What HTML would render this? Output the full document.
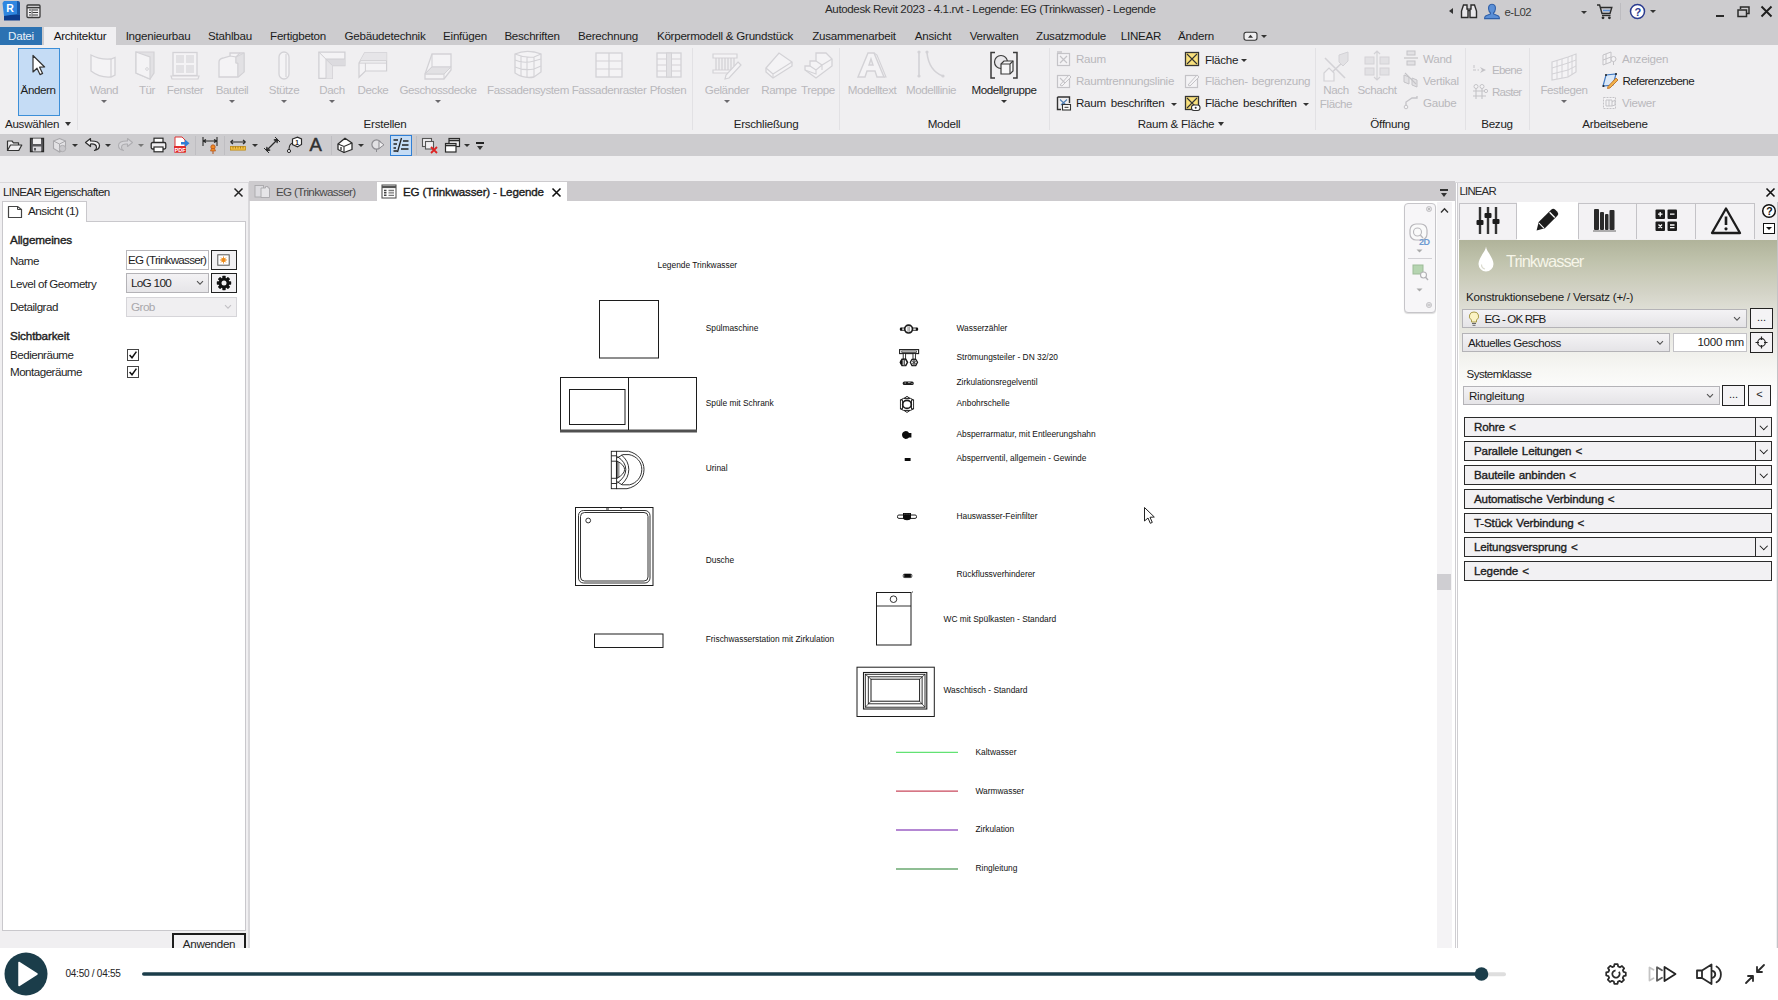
<!DOCTYPE html>
<html lang="de">
<head>
<meta charset="utf-8">
<title>Autodesk Revit 2023 - 4.1.rvt - Legende: EG (Trinkwasser) - Legende</title>
<style>
*{box-sizing:border-box;margin:0;padding:0}
html,body{width:1778px;height:1000px;overflow:hidden;background:#fff}
body{font-family:"Liberation Sans",sans-serif;font-size:12px;color:#1e1e1e;position:relative}
.abs{position:absolute}
#app{position:absolute;left:0;top:0;width:1778px;height:1000px;overflow:hidden;background:#fff}
/* ---------- title bar ---------- */
#titlebar{position:absolute;left:0;top:0;width:1778px;height:45px;background:#cdcccf}
#title{position:absolute;left:825px;top:2px;width:330px;text-align:center;font-size:11.6px;color:#2a2a2a;white-space:nowrap;letter-spacing:-0.39px}
.tab{position:absolute;top:27px;height:18px;line-height:18px;font-size:11.6px;letter-spacing:-0.25px;color:#1c1c1c;white-space:nowrap;transform:translateX(-50%)}
#tabDatei{position:absolute;left:0;top:27px;width:42px;height:18px;background:#2c72b2;color:#e8f0f8;text-align:center;line-height:18px;font-size:11.6px;letter-spacing:-0.25px}
#tabArch{position:absolute;left:44px;top:27px;width:72px;height:18px;background:#f0eff1;text-align:center;line-height:18px;font-size:11.6px;letter-spacing:-0.25px;color:#111}
/* ---------- ribbon ---------- */
#ribbon{position:absolute;left:0;top:45px;width:1778px;height:89px;background:#f0eff1;border-top:1px solid #f0eff1}
.rsep{position:absolute;top:2px;width:1px;height:82px;background:#e2e1e4}
.rlabel{position:absolute;top:71px;font-size:11.6px;letter-spacing:-0.25px;color:#222;white-space:nowrap;transform:translateX(-50%)}
.btn{position:absolute;top:37px;font-size:11.6px;letter-spacing:-0.42px;color:#b9b8bc;white-space:nowrap;transform:translateX(-50%);line-height:14px;text-align:center}
.btn.on{color:#1c1c1c}
.sbtn{position:absolute;font-size:11.6px;letter-spacing:-0.28px;color:#b9b8bc;white-space:nowrap;line-height:14px}
.sbtn.on{color:#1c1c1c}
.dd{position:absolute;width:0;height:0;border-left:3px solid transparent;border-right:3px solid transparent;border-top:3.5px solid #6a696d}
.dd.on{border-top-color:#333}
/* ---------- qat ---------- */
#qat{position:absolute;left:0;top:133px;width:1778px;height:24px;background:linear-gradient(#f0eff1 0,#f0eff1 1px,#cdcccf 1px,#cdcccf 23px,#f0eff1 23px)}
#band{position:absolute;left:0;top:157px;width:1778px;height:25px;background:#f0eff1}
/* ---------- left panel ---------- */
#left{position:absolute;left:0;top:182px;width:250px;height:766px;background:#f0eff1;border-right:2px solid #d9d8db}
#leftbody{position:absolute;left:2px;top:39px;width:244px;height:710px;background:#fff;border:1px solid #c9c8cc}
#leftTab{position:absolute;left:2px;top:19px;width:85px;height:21px;background:#fff;border:1px solid #c9c8cc;border-bottom:none}
.lp{position:absolute;font-size:11.6px;color:#1e1e1e;white-space:nowrap;letter-spacing:-0.5px}
.lp.b{font-weight:normal;-webkit-text-stroke:0.4px #1e1e1e;font-size:11.7px;letter-spacing:-0.15px}
/* ---------- canvas ---------- */
#ctabs{position:absolute;left:249px;top:181px;width:1206px;height:20px;background:#cdcbce}
#canvas{position:absolute;left:250px;top:202px;width:1187px;height:746px;background:#fff}
#vscroll{position:absolute;left:1437px;top:202px;width:15px;height:746px;background:#f4f3f5}
.lg{position:absolute;margin-top:-0.5px;font-size:8.4px;color:#111;white-space:nowrap;line-height:10px}
/* ---------- right panel ---------- */
#right{position:absolute;left:1455px;top:182px;width:323px;height:766px;background:#f0eff1}
.rp{position:absolute;font-size:11.6px;letter-spacing:-0.25px;color:#1b1b1b;white-space:nowrap}
.acc{position:absolute;left:9px;width:308px;height:20px;border:1px solid #2b2b2b;background:#f2f1f3;font-size:11.6px;line-height:18px;padding-left:9px;color:#1b1b1b;letter-spacing:-0.15px;-webkit-text-stroke:0.35px #1b1b1b;word-spacing:1px}
.acc i{position:absolute;right:0;top:0;width:16px;height:18px;border-left:1px solid #2b2b2b;font-style:normal}
.acc i:after{content:'';position:absolute;left:4.5px;top:4.5px;width:4.5px;height:4.5px;border-right:1.9px solid #111;border-bottom:1.9px solid #111;transform:rotate(45deg)}
.sb{font-weight:normal;-webkit-text-stroke:0.35px currentColor;font-size:11.6px;letter-spacing:-0.15px}
/* ---------- player ---------- */
#player{position:absolute;left:0;top:948px;width:1778px;height:52px;background:#fff}
</style>
</head>
<body>
<div id="app">

<!-- TITLEBAR -->
<div id="titlebar">
  <div id="title">Autodesk Revit 2023 - 4.1.rvt - Legende: EG (Trinkwasser) - Legende</div>
  <!-- Revit logo -->
<svg class="abs" style="left:1px;top:0px" width="20" height="22" viewBox="0 0 20 22"><path d="M3 1 L17 1 Q19 1 19 3 L19 20 L3 20 Z" fill="#1858a8"/><path d="M3 15 L19 15 L19 20.5 L3 20.5 Z" fill="#0d3c8c"/><path d="M1.5 3 L3 1 L16 1 L16 14 L3 16 Z" fill="#2f86e0"/><text x="5.2" y="12.3" font-family="Liberation Sans, sans-serif" font-weight="bold" font-size="10.5" fill="#fff">R</text></svg>
<svg class="abs" style="left:26px;top:4px" width="15" height="15" viewBox="0 0 15 15"><rect x="1" y="1" width="13" height="12.5" rx="1" fill="#efeef0" stroke="#3a3a3a" stroke-width="1.3"/><path d="M1 3.6 L14 3.6" stroke="#3a3a3a" stroke-width="1.6"/><path d="M3 6 L5 6 M3 8.5 L5 8.5 M3 11 L5 11" stroke="#3a3a3a" stroke-width="1.2"/><path d="M6.5 6 L12 6 M6.5 8.5 L12 8.5 M6.5 11 L12 11" stroke="#3a3a3a" stroke-width="1.2"/><path d="M6 5 L6 12.5" stroke="#3a3a3a" stroke-width=".8"/></svg>
<!-- right side -->
<div class="abs" style="left:1449px;top:8px;width:0;height:0;border-top:3.5px solid transparent;border-bottom:3.5px solid transparent;border-right:4px solid #333"></div>
<svg class="abs" style="left:1460px;top:3px" width="18" height="17" viewBox="0 0 18 17"><path d="M3.5 2 L7 2 L7 6 L8 6 L8 14.5 L1.5 14.5 L1.5 8 Z M14.5 2 L11 2 L11 6 L10 6 L10 14.5 L16.5 14.5 L16.5 8 Z" fill="#e8e7ea" stroke="#2c2c2c" stroke-width="1.4"/><path d="M8 7.5 L10 7.5" stroke="#2c2c2c" stroke-width="1.4"/></svg>
<svg class="abs" style="left:1483px;top:3px" width="18" height="17" viewBox="0 0 18 17"><path d="M9 1.2 C12 1.2 12.6 3.6 12.4 6 C12.2 8 11.3 9.3 10.6 9.8 L10.6 11 L15.4 13 Q16.4 13.6 16.4 15.6 L1.6 15.6 Q1.6 13.6 2.6 13 L7.4 11 L7.4 9.8 C6.7 9.3 5.8 8 5.6 6 C5.4 3.6 6 1.2 9 1.2 Z" fill="#5b8fd6" stroke="#2f5fa8" stroke-width="1.1"/></svg>
<div class="abs" style="left:1504.500px;top:6px;font-size:11.4px;color:#3a3a3a;letter-spacing:-0.5px">e-L02</div>
<div class="dd on" style="left:1581px;top:11px"></div>
<svg class="abs" style="left:1596px;top:3px" width="18" height="17" viewBox="0 0 18 17"><path d="M1 2 L3.6 2 L6 10.5 L14 10.5 L15.8 4.5 L4.6 4.5" fill="none" stroke="#2c2c2c" stroke-width="1.4"/><path d="M6 12.5 L14.5 12.5" stroke="#2c2c2c" stroke-width="1.3"/><circle cx="7" cy="14.8" r="1.4" fill="#2c2c2c"/><circle cx="13.4" cy="14.8" r="1.4" fill="#2c2c2c"/><path d="M7 7.5 L14 7.5" stroke="#5b8fd6" stroke-width="1.5"/></svg>
<div class="abs" style="left:1620px;top:3px;width:1px;height:17px;background:#bdbcc0"></div>
<svg class="abs" style="left:1629px;top:3px" width="17" height="17" viewBox="0 0 17 17"><circle cx="8.5" cy="8.5" r="7" fill="#fff" stroke="#2a3b8f" stroke-width="1.5"/><text x="5.6" y="12.6" font-family="Liberation Sans, sans-serif" font-weight="bold" font-size="11" fill="#2a3b8f">?</text></svg>
<div class="dd on" style="left:1650px;top:10px"></div>
<div class="abs" style="left:1716px;top:14.500px;width:8px;height:2px;background:#2a2a2a"></div>
<svg class="abs" style="left:1737px;top:6px" width="13" height="12" viewBox="0 0 13 12"><path d="M3.5 3 L3.5 1 L12 1 L12 7.5 L9.5 7.5" fill="none" stroke="#2a2a2a" stroke-width="1.5"/><rect x="1" y="4" width="8.5" height="6.5" fill="none" stroke="#2a2a2a" stroke-width="1.5"/></svg>
<svg class="abs" style="left:1760px;top:5px" width="13" height="13" viewBox="0 0 13 13"><path d="M1.5 1.5 L11.5 11.5 M11.5 1.5 L1.5 11.5" stroke="#1e1e1e" stroke-width="1.9"/></svg>
<!-- ribbon minimize toggle -->
<svg class="abs" style="left:1243px;top:31px" width="16" height="11" viewBox="0 0 16 11"><rect x="1" y="1.2" width="13" height="8" rx="2.2" fill="#efeef0" stroke="#333" stroke-width="1.1"/><path d="M5 6.8 L7.5 3.8 L10 6.8 Z" fill="#333"/></svg>
<div class="dd on" style="left:1261px;top:35px"></div>

  <div id="tabDatei">Datei</div>
  <div id="tabArch">Architektur</div>
  <div class="tab" style="left:158px">Ingenieurbau</div>
  <div class="tab" style="left:230px">Stahlbau</div>
  <div class="tab" style="left:298px">Fertigbeton</div>
  <div class="tab" style="left:385px">Gebäudetechnik</div>
  <div class="tab" style="left:465px">Einfügen</div>
  <div class="tab" style="left:532px">Beschriften</div>
  <div class="tab" style="left:608px">Berechnung</div>
  <div class="tab" style="left:725px">Körpermodell &amp; Grundstück</div>
  <div class="tab" style="left:854px">Zusammenarbeit</div>
  <div class="tab" style="left:933px">Ansicht</div>
  <div class="tab" style="left:994px">Verwalten</div>
  <div class="tab" style="left:1071px">Zusatzmodule</div>
  <div class="tab" style="left:1141px">LINEAR</div>
  <div class="tab" style="left:1196px">Ändern</div>
</div>

<!-- RIBBON -->
<div id="ribbon">
<!-- selected Ändern -->
<div class="abs" style="left:18px;top:2px;width:42px;height:68px;background:#c5dcf5;border:1px solid #3d8fd8"></div>
<svg class="abs" style="left:30px;top:8px" width="18" height="24" viewBox="0 0 18 24"><path d="M3 1.5 L3 18 L7 14.2 L10 20.6 L12.6 19.4 L9.6 13.2 L14.6 13 Z" fill="#fff" stroke="#333" stroke-width="1.2" stroke-linejoin="round"/></svg>
<div class="btn on" style="left:38px">Ändern</div>
<div class="sbtn on" style="left:5px;top:71px">Auswählen</div><div class="dd on" style="left:65px;top:76px;border-left-width:3.5px;border-right-width:3.5px;border-top-width:4px"></div>
<div class="rsep" style="left:77px"></div>

<!-- Erstellen -->
<svg class="abs" style="left:88px;top:4px" width="32" height="32" viewBox="0 0 32 32"><path d="M3 5 Q12 10 23 9 L27 7.5 L27 25 L23 27 Q12 28 3 21 Z" fill="#f4f3f5" stroke="#d3d2d6" stroke-width="1.3"/><path d="M23 9 L23 27" stroke="#d3d2d6" stroke-width="1.2" fill="none"/></svg>
<div class="btn" style="left:104px">Wand</div><div class="dd" style="left:101px;top:54px"></div>
<svg class="abs" style="left:132px;top:3px" width="30" height="32" viewBox="0 0 30 32"><path d="M4 3 L22 3 L22 24 L18 30 L4 24 Z" fill="#e2e1e4" stroke="#d3d2d6" stroke-width="1.2"/><path d="M4 3 L18 8 L18 30 L4 24 Z" fill="#f4f3f5" stroke="#d3d2d6" stroke-width="1.2"/><circle cx="15" cy="20" r="1.3" fill="#fff" stroke="#d3d2d6"/></svg>
<div class="btn" style="left:147px">Tür</div>
<svg class="abs" style="left:169px;top:4px" width="32" height="32" viewBox="0 0 32 32"><rect x="4" y="2.5" width="24" height="23" fill="#f4f3f5" stroke="#d3d2d6" stroke-width="1.3"/><rect x="7" y="5" width="8" height="8" fill="#e2e1e4"/><rect x="17" y="5" width="8" height="8" fill="#e2e1e4"/><rect x="7" y="15" width="8" height="8" fill="#e2e1e4"/><rect x="17" y="15" width="8" height="8" fill="#e2e1e4"/><path d="M2 26 L30 26 L29 29 L3 29 Z" fill="#f4f3f5" stroke="#d3d2d6" stroke-width="1.2"/></svg>
<div class="btn" style="left:185px">Fenster</div>
<svg class="abs" style="left:216px;top:4px" width="32" height="32" viewBox="0 0 32 32"><path d="M3 12 Q3 9 7 8 L14 6 L14 3 L28 3 L28 22 L22 27 L3 27 Z" fill="#f4f3f5" stroke="#d3d2d6" stroke-width="1.3"/><path d="M14 6 L20 7 L20 13 L22 13 L22 27 M22 13 L28 8 M20 7 L24 3" fill="none" stroke="#d3d2d6" stroke-width="1.2"/><path d="M20 7 L28 3 L28 22 L22 27 L22 13 L20 13 Z" fill="#e2e1e4" stroke="#d3d2d6" stroke-width="1"/></svg>
<div class="btn" style="left:232px">Bauteil</div><div class="dd" style="left:229px;top:54px"></div>
<svg class="abs" style="left:274px;top:4px" width="20" height="32" viewBox="0 0 20 32"><rect x="5" y="2" width="10" height="27" rx="5" fill="#f4f3f5" stroke="#d3d2d6" stroke-width="1.3"/><path d="M12 4 L12 27" stroke="#e2e1e4" stroke-width="2"/></svg>
<div class="btn" style="left:284px">Stütze</div><div class="dd" style="left:281px;top:54px"></div>
<svg class="abs" style="left:316px;top:4px" width="32" height="32" viewBox="0 0 32 32"><path d="M2.900 2.100 L28.900 2.100 L28.900 15.500 L16.300 15.500 L16.300 28.400 L2.900 28.400 Z" fill="#f4f3f5" stroke="#d0cfd3" stroke-width="1.300"/><path d="M10 9 L28.900 9 L28.900 15.500 L16.300 15.500 Z" fill="#dcdbdf"/><path d="M10 9 L16.300 15.500 L16.300 28.400 L10 28.400 Z" fill="#e6e5e8"/><path d="M2.900 2.100 L16.300 15.500 M10 9 L28.900 9 M10 9 L10 28.400" stroke="#d0cfd3" stroke-width="1" fill="none"/></svg>
<div class="btn" style="left:332px">Dach</div><div class="dd" style="left:329px;top:54px"></div>
<svg class="abs" style="left:357px;top:4px" width="32" height="32" viewBox="0 0 32 32"><path d="M2 13.100 L7.600 2.900 L29.600 2.900 L29.600 21 L8.400 21 L2 27.300 Z" fill="#f4f3f5" stroke="#d0cfd3" stroke-width="1.200"/><path d="M2 13.100 L7.600 2.900 L29.600 2.900 L29.600 10.700 L3.400 10.700 Z" fill="#e6e5e8"/><path d="M2 13.100 L29.600 13.100 M3.400 10.700 L29.600 10.700 M8.400 13.100 L8.400 21" stroke="#d0cfd3" stroke-width="1" fill="none"/></svg>
<div class="btn" style="left:373px">Decke</div>
<svg class="abs" style="left:422px;top:4px" width="32" height="32" viewBox="0 0 32 32"><path d="M10 4 L29 4 L29 20 L22 29 L3 29 L3 24 Z" fill="#f4f3f5" stroke="#d3d2d6" stroke-width="1.3"/><path d="M3 24 L22 24 L29 16 M22 24 L22 29 M10 4 L10 17 L3 24 M10 17 L29 17" stroke="#d3d2d6" stroke-width="1.1" fill="none"/><path d="M3 24 L10 17 L29 17 L22 24 Z" fill="#e2e1e4" stroke="#d3d2d6"/></svg>
<div class="btn" style="left:438px">Geschossdecke</div><div class="dd" style="left:435px;top:54px"></div>
<svg class="abs" style="left:512px;top:3px" width="32" height="32" viewBox="0 0 32 32"><path d="M3 5 Q12 1 22 3 L29 5 L29 23 L22 28 Q12 30 3 24 Z" fill="#f4f3f5" stroke="#d3d2d6" stroke-width="1.3"/><path d="M3 11 Q12 15 22 12 L29 10 M3 18 Q12 22 22 20 L29 17 M9 7 L9 27 M15 8 L15 28 M22 8 L22 28 M3 5 Q12 9 22 8 L29 5" stroke="#d3d2d6" stroke-width="1.1" fill="none"/></svg>
<div class="btn" style="left:528px">Fassadensystem</div>
<svg class="abs" style="left:593px;top:4px" width="32" height="32" viewBox="0 0 32 32"><rect x="3" y="3" width="26" height="24" fill="#f4f3f5" stroke="#d3d2d6" stroke-width="1.3"/><path d="M3 11 L29 11 M3 19 L29 19 M16 3 L16 27" stroke="#d3d2d6" stroke-width="1.2"/></svg>
<div class="btn" style="left:609px">Fassadenraster</div>
<svg class="abs" style="left:653px;top:4px" width="32" height="32" viewBox="0 0 32 32"><rect x="4" y="3" width="24" height="24" fill="#f4f3f5" stroke="#d3d2d6" stroke-width="1.3"/><rect x="13.5" y="3" width="5" height="24" fill="#e2e1e4" stroke="#d3d2d6"/><path d="M4 9 L13 9 M4 15 L13 15 M4 21 L13 21 M19 9 L28 9 M19 15 L28 15 M19 21 L28 21" stroke="#d3d2d6" stroke-width="1.1"/></svg>
<div class="btn" style="left:668px">Pfosten</div>
<div class="rlabel" style="left:385px">Erstellen</div>
<div class="rsep" style="left:692px"></div>

<!-- Erschließung -->
<svg class="abs" style="left:710px;top:4px" width="34" height="32" viewBox="0 0 34 32"><path d="M3 4 L27 4 L27 8 L3 8 Z M3 20 L22 20 L22 23 L3 23 Z" fill="#f4f3f5" stroke="#d3d2d6" stroke-width="1.2"/><path d="M6 8 L6 20 M9 8 L9 20 M12 8 L12 20 M15 8 L15 20 M18 8 L18 20 M21 8 L21 20 M24 8 L24 16" stroke="#d3d2d6" stroke-width="1.3"/><path d="M28 12 L31 15 L19 28 L15 29 L16 25 Z" fill="#f4f3f5" stroke="#d3d2d6" stroke-width="1.2"/></svg>
<div class="btn" style="left:727px">Geländer</div><div class="dd" style="left:724px;top:54px"></div>
<svg class="abs" style="left:763px;top:4px" width="32" height="32" viewBox="0 0 32 32"><path d="M3 18 L16 3 L29 12 L29 16 L10 28 L3 22 Z" fill="#f4f3f5" stroke="#d3d2d6" stroke-width="1.3"/><path d="M3 18 L10 24 L29 12 M10 24 L10 28" stroke="#d3d2d6" stroke-width="1.1" fill="none"/></svg>
<div class="btn" style="left:779px">Rampe</div>
<svg class="abs" style="left:802px;top:4px" width="32" height="32" viewBox="0 0 32 32"><path d="M14 3 L24 3 L30 9 L30 16 L14 28 L3 20 L3 16 L8 16 L8 11 L14 11 Z" fill="#f4f3f5" stroke="#d3d2d6" stroke-width="1.3"/><path d="M14 11 L20 15 L30 9 M8 16 L14 20 L20 15 M3 20 L14 24 L14 20 M20 15 L20 20" stroke="#d3d2d6" stroke-width="1.1" fill="none"/></svg>
<div class="btn" style="left:818px">Treppe</div>
<div class="rlabel" style="left:766px">Erschließung</div>
<div class="rsep" style="left:839px"></div>

<!-- Modell -->
<svg class="abs" style="left:855px;top:4px" width="34" height="32" viewBox="0 0 34 32"><path d="M3 27 L13 3 L19 3 L29 27 L22 27 L20 21 L12 21 L10 27 Z M14 15 L18 15 L16 9 Z" fill="#f4f3f5" stroke="#d3d2d6" stroke-width="1.4" fill-rule="evenodd"/><path d="M19 3 L22 5 L31 27 L29 27" fill="none" stroke="#d3d2d6" stroke-width="1.1"/></svg>
<div class="btn" style="left:872px">Modelltext</div>
<svg class="abs" style="left:915px;top:3px" width="32" height="34" viewBox="0 0 32 34"><path d="M4 4 L4 26 M12 4 Q14 22 28 27" fill="none" stroke="#d3d2d6" stroke-width="1.6"/><circle cx="4" cy="3" r="1.6" fill="#d3d2d6"/><circle cx="4" cy="27" r="1.6" fill="#d3d2d6"/><circle cx="12" cy="3" r="1.6" fill="#d3d2d6"/><circle cx="28" cy="27" r="1.6" fill="#d3d2d6"/></svg>
<div class="btn" style="left:931px">Modelllinie</div>
<svg class="abs" style="left:988px;top:4px" width="32" height="32" viewBox="0 0 32 32"><path d="M7 2.5 L3 2.5 L3 28 L7 28 M25 2.5 L29 2.5 L29 28 L25 28" fill="none" stroke="#3a3a3a" stroke-width="1.5"/><circle cx="13" cy="12" r="6.5" fill="#e9e8eb" stroke="#3a3a3a" stroke-width="1.2"/><path d="M13 14 L16 11 L25 11 L25 21 L22 24 L13 24 Z" fill="#f7f7f8" stroke="#3a3a3a" stroke-width="1.2"/><path d="M13 14 L22 14 L22 24 M22 14 L25 11" fill="none" stroke="#3a3a3a" stroke-width="1.1"/></svg>
<div class="btn on" style="left:1004px">Modellgruppe</div><div class="dd on" style="left:1001px;top:54px"></div>
<div class="rlabel" style="left:944px">Modell</div>
<div class="rsep" style="left:1049px"></div>

<!-- Raum & Fläche -->
<svg class="abs" style="left:1056px;top:5px" width="16" height="16" viewBox="0 0 16 16"><rect x="1.5" y="2.5" width="12" height="12" fill="#f4f3f5" stroke="#c4c3c7" stroke-width="1.2"/><path d="M4 5 L11 12 M11 5 L4 12" stroke="#c4c3c7" stroke-width="1.2"/><path d="M1 1 L6 1" stroke="#c4c3c7" stroke-width="1.4"/></svg>
<div class="sbtn" style="left:1076px;top:6px">Raum</div>
<svg class="abs" style="left:1056px;top:27px" width="16" height="16" viewBox="0 0 16 16"><rect x="1.5" y="2.5" width="12" height="12" fill="#f4f3f5" stroke="#c4c3c7" stroke-width="1.2"/><path d="M4 12 L13 2 L15 4 L6 13 Z" fill="#f4f3f5" stroke="#c4c3c7" stroke-width="1"/><path d="M4 5 L9 10" stroke="#c4c3c7" stroke-width="1.1"/></svg>
<div class="sbtn" style="left:1076px;top:28px">Raumtrennungslinie</div>
<svg class="abs" style="left:1056px;top:49px" width="16" height="16" viewBox="0 0 16 16"><path d="M1.5 2 L1.5 14.5 L5 14.5 M1.5 2 L13.5 2 L13.5 8" fill="none" stroke="#333" stroke-width="1.4"/><path d="M4 4.5 L11 11 M11 4.5 L5 10" stroke="#4e7fb5" stroke-width="1.1"/><rect x="6.5" y="9.5" width="8" height="5.5" fill="#fff" stroke="#333" stroke-width="1.1"/><path d="M8.5 12.3 L12.5 12.3" stroke="#333" stroke-width="1"/></svg>
<div class="sbtn on" style="left:1076px;top:50px;word-spacing:2px">Raum beschriften</div><div class="dd on" style="left:1171px;top:57px"></div>

<svg class="abs" style="left:1184px;top:5px" width="16" height="16" viewBox="0 0 16 16"><rect x="1.5" y="1.5" width="13" height="13" fill="#f8e07c" stroke="#333" stroke-width="1.3"/><path d="M3 3 L13 13 M13 3 L3 13" stroke="#333" stroke-width="1.1"/></svg>
<div class="sbtn on" style="left:1205px;top:7px">Fläche</div><div class="dd on" style="left:1241px;top:13px"></div>
<svg class="abs" style="left:1184px;top:27px" width="16" height="16" viewBox="0 0 16 16"><rect x="1.5" y="2.5" width="12" height="12" fill="#f4f3f5" stroke="#c4c3c7" stroke-width="1.2"/><path d="M4 12 L13 2 L15 4 L6 13 Z" fill="#f4f3f5" stroke="#c4c3c7" stroke-width="1"/></svg>
<div class="sbtn" style="left:1205px;top:28px;word-spacing:1px">Flächen- begrenzung</div>
<svg class="abs" style="left:1184px;top:49px" width="17" height="17" viewBox="0 0 17 17"><rect x="1.5" y="1.5" width="13" height="13" fill="#f8e07c" stroke="#333" stroke-width="1.3"/><path d="M3 3 L13 13 M13 3 L3 13" stroke="#333" stroke-width="1.1"/><rect x="7.5" y="10" width="8.5" height="5.5" rx="2.5" fill="#fff" stroke="#333" stroke-width="1.1"/><circle cx="11.7" cy="12.8" r="1" fill="#333"/></svg>
<div class="sbtn on" style="left:1205px;top:50px;word-spacing:2px">Fläche beschriften</div><div class="dd on" style="left:1303px;top:57px"></div>
<div class="rlabel" style="left:1176px">Raum &amp; Fläche</div><div class="dd on" style="left:1218px;top:76px;border-left-width:3.5px;border-right-width:3.5px;border-top-width:4px"></div>
<div class="rsep" style="left:1315px"></div>

<!-- Öffnung -->
<svg class="abs" style="left:1320px;top:5px" width="32" height="32" viewBox="0 0 32 32"><path d="M5 7 L25 27 M25 9 L6 27" stroke="#d3d2d6" stroke-width="1.6"/><path d="M19 4 L28 1 L28 10 L23 15 L19 11 Z" fill="#e2e1e4" stroke="#d3d2d6"/><path d="M4 22 L9 17 L14 22 L14 30 L4 30 Z" fill="#f4f3f5" stroke="#d3d2d6" stroke-width="1.2"/></svg>
<div class="btn" style="left:1336px">Nach<br>Fläche</div>
<svg class="abs" style="left:1361px;top:4px" width="32" height="32" viewBox="0 0 32 32"><path d="M16 1 L16 30 M13 4 L16 1 L19 4 M13 27 L16 30 L19 27" fill="none" stroke="#d3d2d6" stroke-width="1.2"/><rect x="4" y="7" width="9" height="7" fill="#e2e1e4" stroke="#d3d2d6"/><rect x="19" y="7" width="9" height="7" fill="#e2e1e4" stroke="#d3d2d6"/><rect x="4" y="18" width="9" height="7" fill="#e2e1e4" stroke="#d3d2d6"/><rect x="19" y="18" width="9" height="7" fill="#e2e1e4" stroke="#d3d2d6"/></svg>
<div class="btn" style="left:1377px">Schacht</div>
<svg class="abs" style="left:1403px;top:4px" width="16" height="16" viewBox="0 0 16 16"><rect x="4" y="1" width="8" height="4" fill="#e2e1e4" stroke="#c4c3c7"/><rect x="4" y="11" width="8" height="4" fill="#e2e1e4" stroke="#c4c3c7"/><path d="M1 8 L15 8" stroke="#c4c3c7" stroke-width="1.2"/></svg>
<div class="sbtn" style="left:1423px;top:6px">Wand</div>
<svg class="abs" style="left:1403px;top:26px" width="16" height="16" viewBox="0 0 16 16"><path d="M1 3 L6 5 L6 12 L1 10 Z M9 6 L14 8 L14 15 L9 13 Z" fill="#e2e1e4" stroke="#c4c3c7"/><path d="M2 1 L13 12" stroke="#c4c3c7" stroke-width="1.1"/></svg>
<div class="sbtn" style="left:1423px;top:28px">Vertikal</div>
<svg class="abs" style="left:1403px;top:48px" width="16" height="16" viewBox="0 0 16 16"><path d="M3 13 L3 8 L9 4 L14 4 L14 2" fill="none" stroke="#c4c3c7" stroke-width="1.3"/><circle cx="3" cy="13" r="1.8" fill="#f4f3f5" stroke="#c4c3c7"/></svg>
<div class="sbtn" style="left:1423px;top:50px">Gaube</div>
<div class="rlabel" style="left:1390px">Öffnung</div>
<div class="rsep" style="left:1465px"></div>

<!-- Bezug -->
<svg class="abs" style="left:1472px;top:16px" width="16" height="16" viewBox="0 0 16 16"><path d="M1 8 L4 8 M5.5 8 L7 8" stroke="#c4c3c7" stroke-width="1.1"/><path d="M2 3 L2 6" stroke="#c4c3c7"/><path d="M8 5 L14 8 L8 11 L10 8 Z" fill="#c4c3c7"/></svg>
<div class="sbtn" style="left:1492px;top:17px;letter-spacing:-0.8px">Ebene</div>
<svg class="abs" style="left:1472px;top:38px" width="16" height="16" viewBox="0 0 16 16"><path d="M4 4 L4 15 M10 4 L10 15 M1 7 L14 7 M1 12 L14 12" stroke="#c4c3c7" stroke-width="1.1"/><circle cx="4" cy="2.5" r="2" fill="#f4f3f5" stroke="#c4c3c7"/><circle cx="10" cy="2.5" r="2" fill="#f4f3f5" stroke="#c4c3c7"/><circle cx="14" cy="7" r="1.6" fill="#f4f3f5" stroke="#c4c3c7"/></svg>
<div class="sbtn" style="left:1492px;top:39px;letter-spacing:-0.8px">Raster</div>
<div class="rlabel" style="left:1497px">Bezug</div>
<div class="rsep" style="left:1529px"></div>

<!-- Arbeitsebene -->
<svg class="abs" style="left:1548px;top:4px" width="32" height="32" viewBox="0 0 32 32"><path d="M4 12 L20 7 L28 4 L28 22 L20 27 L4 30 Z" fill="#f4f3f5" stroke="#d3d2d6" stroke-width="1.2"/><path d="M4 18 L20 13 L28 10 M4 24 L20 20 L28 16 M9 10 L9 29 M14 9 L14 28 M20 7 L20 27 M24 5.5 L24 24.5" stroke="#d3d2d6" stroke-width="1" fill="none"/></svg>
<div class="btn" style="left:1564px">Festlegen</div><div class="dd" style="left:1561px;top:54px"></div>
<svg class="abs" style="left:1602px;top:4px" width="16" height="16" viewBox="0 0 16 16"><path d="M1 5 L9 2 L9 12 L1 15 Z M4 4 L4 14 M1 10 L9 7" fill="#f4f3f5" stroke="#c4c3c7"/><circle cx="11.5" cy="9" r="2.5" fill="#f4f3f5" stroke="#c4c3c7"/><path d="M11.5 11.5 L11.5 15" stroke="#c4c3c7"/></svg>
<div class="sbtn" style="left:1622px;top:6px">Anzeigen</div>
<svg class="abs" style="left:1602px;top:26px" width="17" height="17" viewBox="0 0 17 17"><path d="M4 3 L14 2 L11 13 L1 14 Z" fill="#dbe8f7" stroke="#3f78c2" stroke-width="1.2"/><circle cx="4" cy="3" r="1" fill="#222"/><circle cx="14" cy="2" r="1" fill="#222"/><circle cx="1.5" cy="14" r="1" fill="#222"/><path d="M6 14.5 L14 6 L16 8 L8 16 L5.5 16.5 Z" fill="#f2b24a" stroke="#b5651d" stroke-width=".8"/></svg>
<div class="sbtn on" style="left:1622.500px;top:28px;letter-spacing:-0.6px">Referenzebene</div>
<svg class="abs" style="left:1602px;top:48px" width="16" height="16" viewBox="0 0 16 16"><rect x="1.5" y="3.5" width="12" height="11" fill="#f4f3f5" stroke="#c4c3c7" stroke-dasharray="2 1"/><path d="M4 6 L10 6 L10 12 L4 12 Z M7 6 L7 12 M10 8 L13 6 L13 11 L10 12" fill="none" stroke="#c4c3c7"/></svg>
<div class="sbtn" style="left:1622px;top:50px">Viewer</div>
<div class="rlabel" style="left:1615px">Arbeitsebene</div>

</div>

<!-- QAT -->
<div id="qat">
<svg class="abs" style="left:6px;top:5px" width="17" height="15" viewBox="0 0 17 15"><path d="M1.5 12.5 L1.5 3 L6 3 L7.5 4.8 L12.5 4.8 L12.5 7" fill="#efeef0" stroke="#333" stroke-width="1.2" stroke-linejoin="round"/><path d="M1.5 12.5 L4.5 7 L15.8 7 L12.8 12.5 Z" fill="#efeef0" stroke="#333" stroke-width="1.2" stroke-linejoin="round"/></svg>
<svg class="abs" style="left:29px;top:4px" width="16" height="16" viewBox="0 0 16 16"><path d="M1.5 1.5 L14.5 1.5 L14.5 14.5 L1.5 14.5 Z" fill="#58585c" stroke="#2b2b2b" stroke-width="1.3"/><rect x="4" y="1.5" width="8" height="5.5" fill="#efeef0"/><rect x="3.8" y="9.5" width="8.4" height="5" fill="#d9d8dc"/><rect x="5" y="11" width="2" height="2.5" fill="#58585c"/></svg>
<svg class="abs" style="left:51px;top:4px" width="17" height="17" viewBox="0 0 17 17"><path d="M8.5 1.5 L14.5 4 L14.5 11.5 L8.5 15 L2.5 11.5 L2.5 4 Z" fill="#e2e1e4" stroke="#a8a7ab" stroke-width="1.1"/><path d="M2.5 4 L8.5 7 L14.5 4 M8.5 7 L8.5 15" stroke="#a8a7ab" fill="none"/><circle cx="11.5" cy="11.5" r="3.2" fill="#c9c8cc" stroke="#a8a7ab" stroke-width=".8"/></svg>
<div class="dd on" style="left:72px;top:11px"></div>
<svg class="abs" style="left:84px;top:4px" width="17" height="15" viewBox="0 0 17 15"><path d="M6.5 1.5 L1.5 5.5 L6.5 9.5 L6.5 7 Q12.5 6.5 12.5 10.5 Q12.5 12.5 10.5 13.5 Q15.5 12.5 15.5 8.5 Q15.5 3.8 6.5 4 Z" fill="#efeef0" stroke="#2b2b2b" stroke-width="1.2" stroke-linejoin="round"/></svg>
<div class="dd on" style="left:105px;top:11px"></div>
<svg class="abs" style="left:117px;top:4px" width="17" height="15" viewBox="0 0 17 15"><path d="M10.5 1.5 L15.5 5.5 L10.5 9.5 L10.5 7 Q4.5 6.5 4.5 10.5 Q4.5 12.5 6.5 13.5 Q1.5 12.5 1.5 8.5 Q1.5 3.8 10.5 4 Z" fill="#d6d5d9" stroke="#aeadb1" stroke-width="1.1" stroke-linejoin="round"/></svg>
<div class="dd" style="left:138px;top:11px;border-top-color:#777"></div>
<svg class="abs" style="left:150px;top:4px" width="17" height="16" viewBox="0 0 17 16"><rect x="4" y="1.2" width="9" height="4.5" fill="#fff" stroke="#2b2b2b" stroke-width="1.2"/><rect x="1.2" y="5.5" width="14.6" height="6.5" rx="1.5" fill="#efeef0" stroke="#2b2b2b" stroke-width="1.3"/><rect x="4" y="10" width="9" height="4.8" fill="#fff" stroke="#2b2b2b" stroke-width="1.2"/></svg>
<svg class="abs" style="left:173px;top:3px" width="17" height="18" viewBox="0 0 17 18"><path d="M2 1 L9 1 L12 4 L12 16 L2 16 Z" fill="#fff" stroke="#d33" stroke-width="1"/><rect x="1" y="10" width="12" height="6.5" fill="#e02b2b"/><text x="1.6" y="15.6" font-family="Liberation Sans, sans-serif" font-weight="bold" font-size="5.6" fill="#fff">PDF</text><path d="M8 6 L12 6 L12 3.5 L16.5 7.2 L12 11 L12 8.5 L8 8.5 Z" fill="#2f7fd6"/></svg>
<div class="abs" style="left:195px;top:3px;width:1px;height:19px;background:#bfbec2"></div>
<svg class="abs" style="left:201px;top:3px" width="18" height="19" viewBox="0 0 18 19"><path d="M2 1 L2 10 M16 1 L16 10 M2 5 L16 5 M2 5 L5 3.5 M2 5 L5 6.5 M16 5 L13 3.5 M16 5 L13 6.5" stroke="#2b2b2b" stroke-width="1.1" fill="none"/><circle cx="12" cy="11" r="2.2" fill="#f08a24" stroke="#b5531b" stroke-width=".8"/><path d="M9.5 15 L14.5 15 L13.5 12.5 L10.5 12.5 Z" fill="#f08a24" stroke="#b5531b" stroke-width=".7"/><path d="M12 15 L12 18" stroke="#b5531b" stroke-width="1"/></svg>
<div class="abs" style="left:224px;top:3px;width:1px;height:19px;background:#bfbec2"></div>
<svg class="abs" style="left:229px;top:5px" width="18" height="14" viewBox="0 0 18 14"><path d="M1.5 4 L16.5 4 M1.5 4 L4 2 M1.5 4 L4 6 M16.5 4 L14 2 M16.5 4 L14 6" stroke="#2b2b2b" stroke-width="1.2" fill="none"/><rect x="1.5" y="8.5" width="15" height="3.6" fill="#f3c043" stroke="#c08a10" stroke-width=".8"/><path d="M4 8.5 L4 10.5 M6.5 8.5 L6.5 10.5 M9 8.5 L9 10.5 M11.5 8.5 L11.5 10.5 M14 8.5 L14 10.5" stroke="#8a6208" stroke-width=".7"/></svg>
<div class="dd on" style="left:252px;top:11px"></div>
<svg class="abs" style="left:263px;top:3px" width="18" height="18" viewBox="0 0 18 18"><path d="M3.5 14.5 L14.5 3.5 M3.5 14.5 L4 10.8 M3.5 14.5 L7.2 14 M14.5 3.5 L10.8 4 M14.5 3.5 L14 7.2" stroke="#2b2b2b" stroke-width="1.3" fill="none"/><path d="M1 12 L6 17 M12 1 L17 6" stroke="#2b2b2b" stroke-width="1"/></svg>
<svg class="abs" style="left:286px;top:3px" width="17" height="18" viewBox="0 0 17 18"><path d="M6.5 3 L11.5 1.2 L15.5 3 L15.5 8.5 L11.5 10.8 L6.5 8.5 Z" fill="#fff" stroke="#2b2b2b" stroke-width="1.2"/><text x="9.2" y="8.6" font-family="Liberation Sans, sans-serif" font-weight="bold" font-size="6.5" fill="#222">1</text><path d="M3 14 Q3 8 6.5 7" stroke="#2b2b2b" stroke-width="1.1" fill="none"/><circle cx="3" cy="15" r="1.6" fill="#efeef0" stroke="#2b2b2b" stroke-width="1"/></svg>
<div class="abs" style="left:309.500px;top:1.500px;font-size:18.500px;line-height:20px;color:#303030;-webkit-text-stroke:0.5px #303030">A</div>
<div class="abs" style="left:331px;top:3px;width:1px;height:19px;background:#bfbec2"></div>
<svg class="abs" style="left:336px;top:3px" width="18" height="18" viewBox="0 0 18 18"><path d="M2 8 L9 2.2 L16 7 L16 13.5 L8 16.5 L2 13.5 Z" fill="#fff" stroke="#2b2b2b" stroke-width="1.3" stroke-linejoin="round"/><path d="M2 8 L8 10.5 L16 7 M8 10.5 L8 16.5" fill="none" stroke="#2b2b2b" stroke-width="1.1"/><rect x="4" y="11" width="2" height="3" fill="#777"/></svg>
<div class="dd on" style="left:358px;top:11px"></div>
<svg class="abs" style="left:370px;top:5px" width="15" height="15" viewBox="0 0 15 15"><circle cx="6.5" cy="6.5" r="4.6" fill="#e2e1e4" stroke="#8c8b90" stroke-width="1.2"/><path d="M9 3 L14 6.8 L9 10.5 Z" fill="#efeef0" stroke="#8c8b90" stroke-width="1"/><path d="M6.5 11 L6.5 14" stroke="#8c8b90"/></svg>
<div class="abs" style="left:390px;top:2px;width:22px;height:21px;background:#c5dcf5;border:1px solid #2f7fd6"></div>
<svg class="abs" style="left:392px;top:4px" width="18" height="16" viewBox="0 0 18 16"><path d="M1.5 3 L6 3 M1.5 7 L5 7 M1.5 11 L4 11 M1.5 14 L5 14" stroke="#222" stroke-width="1.4"/><path d="M9.5 1 L5.5 15" stroke="#222" stroke-width="1.3"/><path d="M11 4 L16.5 4 M10 8 L16.5 8 M9 12 L16.5 12" stroke="#222" stroke-width="1.4"/></svg>
<div class="abs" style="left:416px;top:3px;width:1px;height:19px;background:#bfbec2"></div>
<svg class="abs" style="left:421px;top:4px" width="18" height="17" viewBox="0 0 18 17"><rect x="1.5" y="1.5" width="9" height="8" fill="#efeef0" stroke="#555" stroke-width="1.1"/><rect x="4.5" y="4.5" width="8" height="7.5" fill="#efeef0" stroke="#555" stroke-width="1.1"/><path d="M10 10 L16 16 M16 10 L10 16" stroke="#d22" stroke-width="1.8"/></svg>
<svg class="abs" style="left:444px;top:4px" width="17" height="17" viewBox="0 0 17 17"><rect x="5" y="1.5" width="10.5" height="8" fill="#efeef0" stroke="#2b2b2b" stroke-width="1.2"/><path d="M5 3.5 L15.5 3.5" stroke="#2b2b2b" stroke-width="1.6"/><rect x="1.5" y="6.5" width="10.5" height="8.5" fill="#fff" stroke="#2b2b2b" stroke-width="1.2"/><path d="M1.5 8.5 L12 8.5" stroke="#2b2b2b" stroke-width="1.6"/></svg>
<div class="dd on" style="left:464px;top:11px"></div>
<div class="abs" style="left:476px;top:9px;width:8px;height:1.5px;background:#222"></div>
<div class="dd on" style="left:476.5px;top:12.5px;border-left-width:3.5px;border-right-width:3.5px;border-top-width:4px"></div>

</div>
<div id="band"></div>

<!-- LEFT PANEL -->
<div id="left">
<div class="abs" style="left:0;top:0;width:248px;height:1px;background:#d9d8db"></div><div class="abs" style="left:3px;top:3px;font-size:11.6px;letter-spacing:-0.6px;color:#222;white-space:nowrap">LINEAR Eigenschaften</div>
<svg class="abs" style="left:233px;top:5px" width="11" height="11" viewBox="0 0 11 11"><path d="M1.5 1.5 L9.5 9.5 M9.5 1.5 L1.5 9.5" stroke="#222" stroke-width="1.5"/></svg>
<div id="leftbody"></div>
<div id="leftTab"></div>
<svg class="abs" style="left:7px;top:23px" width="16" height="14" viewBox="0 0 16 14"><path d="M1.5 1.5 L10.5 1.5 L14.5 4.5 L14.5 12.5 L1.5 12.5 Z" fill="#fff" stroke="#444" stroke-width="1.2" stroke-linejoin="round"/><path d="M10.5 1.5 L10.5 4.5 L14.5 4.5" fill="none" stroke="#444" stroke-width="1"/></svg>
<div class="lp" style="left:28px;top:22px;font-size:11.8px;letter-spacing:-0.55px">Ansicht (1)</div>

<div class="lp b" style="left:10px;top:51px">Allgemeines</div>
<div class="lp" style="left:10px;top:72px">Name</div>
<div class="abs" style="left:126px;top:68px;width:83px;height:20px;border:1px solid #b9b8bc;background:#fff"></div>
<div class="lp" style="left:128px;top:71px;font-size:11.6px;letter-spacing:-0.72px">EG (Trinkwasser)</div>
<div class="abs" style="left:211px;top:68px;width:26px;height:20px;border:1.5px solid #222;background:#f2f1f3"></div>
<svg class="abs" style="left:217px;top:72px" width="13" height="12" viewBox="0 0 13 12"><rect x=".8" y=".8" width="11.4" height="10.4" fill="#fff" stroke="#555" stroke-width="1"/><circle cx="6.5" cy="6" r="2.2" fill="#f5a623"/><path d="M6.5 2.4 L6.5 9.6 M2.9 6 L10.1 6 M4 3.5 L9 8.5 M9 3.5 L4 8.5" stroke="#e8801a" stroke-width=".8"/></svg>

<div class="lp" style="left:10px;top:95px">Level of Geometry</div>
<div class="abs" style="left:126px;top:91px;width:83px;height:20px;border:1px solid #b4b3b7;background:linear-gradient(#f3f2f4,#e6e5e8)"></div>
<div class="lp" style="left:131px;top:94px;font-size:11.8px;letter-spacing:-0.75px">LoG 100</div>
<svg class="abs" style="left:196px;top:98px" width="8" height="6" viewBox="0 0 8 6"><path d="M1 1.2 L4 4.2 L7 1.2" fill="none" stroke="#555" stroke-width="1.1"/></svg>
<div class="abs" style="left:211px;top:91px;width:26px;height:20px;border:1.5px solid #222;background:#f2f1f3"></div>
<svg class="abs" style="left:216px;top:93px" width="16" height="16" viewBox="0 0 16 16"><g transform="translate(8 8)"><g fill="#111"><rect x="-1.7" y="-7.2" width="3.4" height="14.4" rx=".6"/><rect x="-1.7" y="-7.2" width="3.4" height="14.4" rx=".6" transform="rotate(45)"/><rect x="-1.7" y="-7.2" width="3.4" height="14.4" rx=".6" transform="rotate(90)"/><rect x="-1.7" y="-7.2" width="3.4" height="14.4" rx=".6" transform="rotate(135)"/><circle r="5.3"/></g><circle r="2.5" fill="#f2f1f3"/></g></svg>

<div class="lp" style="left:10px;top:118px">Detailgrad</div>
<div class="abs" style="left:126px;top:115px;width:111px;height:20px;border:1px solid #d6d5d9;background:#f0eff1"></div>
<div class="lp" style="left:131px;top:118px;font-size:11.8px;color:#a9a8ac;letter-spacing:-0.6px">Grob</div>
<svg class="abs" style="left:224px;top:122px" width="8" height="6" viewBox="0 0 8 6"><path d="M1 1.2 L4 4.2 L7 1.2" fill="none" stroke="#c2c1c5" stroke-width="1.1"/></svg>

<div class="lp b" style="left:10px;top:147px">Sichtbarkeit</div>
<div class="lp" style="left:10px;top:166px">Bedienräume</div>
<div class="abs" style="left:127px;top:167px;width:12px;height:12px;border:1px solid #444;background:#fff"></div>
<svg class="abs" style="left:128px;top:168px" width="10" height="10" viewBox="0 0 10 10"><path d="M1.6 5 L4 7.8 L8.4 1.6" fill="none" stroke="#111" stroke-width="1.5"/></svg>
<div class="lp" style="left:10px;top:183px">Montageräume</div>
<div class="abs" style="left:127px;top:184px;width:12px;height:12px;border:1px solid #444;background:#fff"></div>
<svg class="abs" style="left:128px;top:185px" width="10" height="10" viewBox="0 0 10 10"><path d="M1.6 5 L4 7.8 L8.4 1.6" fill="none" stroke="#111" stroke-width="1.5"/></svg>

<div class="abs" style="left:172px;top:751px;width:74px;height:20px;border:2px solid #1d1d1d;background:#f4f3f5;text-align:center;font-size:11.6px;line-height:17px;letter-spacing:-0.3px;color:#222">Anwenden</div>

</div>

<!-- CANVAS -->
<div id="ctabs">
<svg class="abs" style="left:5px;top:3px" width="17" height="15" viewBox="0 0 17 15"><rect x="1" y="1.500" width="8.500" height="11.500" fill="#dddce0" stroke="#a9a8ac" stroke-width=".9"/><path d="M7 4 L11.500 4 L11.500 2.500 L14 2.500 L14 4 L15.500 4 L15.500 13.500 L7 13.500 Z" fill="#e6e5e8" stroke="#a9a8ac" stroke-width=".9"/></svg>
<div class="abs" style="left:27px;top:4px;font-size:11.6px;letter-spacing:-0.65px;color:#4a4a4a;white-space:nowrap">EG (Trinkwasser)</div>
<div class="abs" style="left:128px;top:1px;width:190px;height:19px;background:#fff"></div>
<svg class="abs" style="left:132px;top:3px" width="16" height="15" viewBox="0 0 16 15"><rect x="1" y="1" width="14" height="13" fill="#fff" stroke="#555" stroke-width="1.100"/><path d="M1 3 L15 3" stroke="#555" stroke-width="2.200"/><path d="M3 6.500 L5.500 6.500 M3 8.800 L5.500 8.800 M3 11.300 L5.500 11.300" stroke="#444" stroke-width="1.500"/><path d="M7.500 6.500 L13 6.500 M7.500 8.800 L13 8.800 M7.500 11.300 L13 11.300" stroke="#777" stroke-width="1.300"/></svg>
<div class="abs" style="left:154px;top:4px;font-size:11.6px;letter-spacing:-0.17px;color:#1a1a1a;white-space:nowrap;-webkit-text-stroke:0.35px #1a1a1a">EG (Trinkwasser) - Legende</div>
<svg class="abs" style="left:302px;top:6px" width="11" height="11" viewBox="0 0 11 11"><path d="M1.500 1.500 L9.500 9.500 M9.500 1.500 L1.500 9.500" stroke="#111" stroke-width="1.600"/></svg>
<div class="abs" style="left:1191px;top:8px;width:8px;height:1.500px;background:#333"></div>
<div class="dd on" style="left:1191.5px;top:11.500px;border-left-width:3.500px;border-right-width:3.500px;border-top-width:4px"></div>
</div>
<div id="canvas">
<svg class="abs" style="left:0;top:0" width="1187" height="746" viewBox="250 202 1187 746" fill="none" stroke="#1c1c1c" stroke-width="1">
<!-- Spülmaschine -->
<rect x="599.5" y="300.5" width="59" height="57.5"/>
<!-- Spüle mit Schrank -->
<rect x="560.5" y="377.5" width="136" height="53"/>
<path d="M560 431 L697 431" stroke="#505050" stroke-width="3"/>
<path d="M628.5 377.5 L628.5 430"/>
<rect x="569.5" y="389.5" width="55.5" height="35"/>
<!-- Urinal -->
<g stroke-width=".9">
<rect x="611.300" y="451.300" width="5.300" height="37.400"/>
<path d="M611.300 455.800 L616.600 455.800 M611.300 461.200 L616.600 461.200 M611.300 478.300 L616.600 478.300 M611.300 483.500 L616.600 483.500"/>
<path d="M616.800 461 L616.800 478.300" stroke-width="1.700"/>
<rect x="617.700" y="462" width="1.800" height="15.500" fill="#999" stroke="none"/>
<path d="M616.600 451.300 L628.500 451.300 C638 453.500 644 461 644 469.500 C644 478.500 637.500 486.500 627 488.700 L616.600 488.700"/>
<path d="M623 454.600 L629 454.600 C636.500 456 641.800 462 641.800 469.300 C641.800 477 636.500 483.300 629.500 484.800 L622 484.800"/>
<path d="M617 461 Q624.600 465 624.600 469.500 Q624.600 474 617 478.300"/>
<path d="M617.300 456.500 Q625.800 462 625.800 469.500 Q625.800 477 617.300 483"/>
<path d="M621.500 455 Q628.800 461 628.800 469.500 Q628.800 478 621.500 484.500"/>
<path d="M616.800 458 L623 454.600 M616.800 481.500 L622 484.800"/>
</g>
<!-- Dusche -->
<rect x="575.5" y="507.500" width="77.5" height="78"/>
<rect x="578.5" y="510.500" width="71.500" height="72.5" rx="5" stroke-width=".9"/>
<rect x="580.5" y="512.500" width="67.500" height="68.5" rx="4" stroke-width=".9"/>
<circle cx="588.2" cy="520.5" r="2.4" stroke-width=".9"/>
<path d="M606 509 L609 509 M620 508 L622 508" stroke-width="1.2"/>
<!-- Frischwasserstation -->
<rect x="594.5" y="634" width="68.5" height="13.5"/>

<!-- Wasserzähler -->
<g>
<rect x="900.300" y="328" width="17.400" height="2.300" rx=".8" fill="#fff" stroke-width=".9"/>
<rect x="900" y="327.800" width="2.200" height="2.700" fill="#111" stroke="none"/><rect x="915.800" y="327.800" width="2.200" height="2.700" fill="#111" stroke="none"/>
<circle cx="908.600" cy="329.100" r="3.900" fill="#fff" stroke-width="1.700"/>
<path d="M908 326.500 L908 331.800 M909.300 326.500 L909.300 331.800" stroke-width=".6" stroke="#555"/>
</g>
<!-- Strömungsteiler -->
<g>
<rect x="899.600" y="349.600" width="19" height="4" stroke-width="1.100"/>
<rect x="901.800" y="351" width="14.600" height="1.600" stroke-width=".7"/>
<rect x="903.200" y="353.400" width="2.400" height="5.800" fill="#fff" stroke-width=".9"/><rect x="913" y="353.400" width="2.400" height="5.800" fill="#fff" stroke-width=".9"/>
<path d="M900.300 362.300 L902 359.300 L905.800 359.300 L907.500 362.300 L905.800 365.600 L902 365.600 Z" stroke-width="1.500"/>
<path d="M910.300 362.300 L912 359.300 L915.800 359.300 L917.500 362.300 L915.800 365.600 L912 365.600 Z" stroke-width="1.300"/>
<rect x="903" y="359.500" width="1.600" height="6" fill="#fff" stroke-width=".7"/><rect x="913.200" y="359.500" width="1.600" height="6" fill="#fff" stroke-width=".7"/>
<path d="M911.500 360.500 L916.500 364.500 M916.500 360.500 L911.500 364.500" stroke-width=".6"/>
<rect x="900.500" y="360.500" width="2" height="3.600" fill="#111" stroke="none"/>
</g>
<!-- Zirkulationsregelventil -->
<rect x="902.700" y="381.500" width="11" height="3.600" rx="1.600" fill="#1c1c1c" stroke="none"/>
<path d="M904.500 383 L906 383 M908 382.600 L910.500 382.600 M911.500 383.500 L912.500 383.500" stroke="#ddd" stroke-width=".7"/>
<!-- Anbohrschelle -->
<g>
<ellipse cx="907" cy="404.400" rx="4.300" ry="4" stroke-width="1.700"/>
<rect x="900.400" y="400" width="2.100" height="8.800" stroke-width=".9"/>
<rect x="911.500" y="400" width="2.100" height="8.800" stroke-width=".9"/>
<path d="M900.400 400 L903.500 398.400 L910.500 398.400 L913.600 400 M900.400 408.800 L903.500 410.400 L910.500 410.400 L913.600 408.800" stroke-width="1"/>
<path d="M904 398.400 L907 396.400 L910 398.400 M904 410.400 L907 412.400 L910 410.400" stroke-width="1"/>
</g>
<!-- Absperrarmatur -->
<path d="M902 434.800 Q902.200 431.600 905.800 431 Q908.300 431 909 433 L911.400 433 L911.400 437.600 L909 437.600 Q908 439 905.500 438.900 Q902.200 438.300 902 434.800 Z" fill="#0c0c0c" stroke="none"/>
<!-- Absperrventil -->
<rect x="904.700" y="458" width="5.900" height="3" rx=".5" fill="#0c0c0c" stroke="none"/>
<!-- Hauswasser-Feinfilter -->
<g>
<rect x="897.500" y="515" width="19" height="3.400" rx="1.400" fill="#fff" stroke-width="1"/>
<path d="M903 513 L911 513 L911 518 Q910.500 520.200 907 520.200 Q903.500 520.200 903 518 Z" fill="#0c0c0c" stroke="none"/>
<path d="M904.500 514.200 L905.300 514.200 M906.600 514.200 L907.400 514.200 M908.700 514.200 L909.500 514.200" stroke="#ccc" stroke-width=".6"/>
</g>
<!-- Rückflussverhinderer -->
<rect x="903.100" y="574" width="8.900" height="3.600" rx="1.600" fill="#0c0c0c" stroke="#0c0c0c" stroke-width=".6"/>
<path d="M903.800 574.800 L903.800 576.800 M911.300 574.800 L911.300 576.800" stroke="#ddd" stroke-width=".7"/>
<!-- WC -->
<rect x="876.500" y="592.500" width="34.500" height="52.500"/>
<path d="M876.500 606 L911 606" stroke-width=".9"/>
<circle cx="893.500" cy="599.200" r="3.300" stroke-width=".9"/>
<path d="M912 592 L913 592" stroke-width=".8"/>
<!-- Waschtisch -->
<rect x="857" y="667.200" width="77.300" height="49.300"/>
<rect x="863.500" y="672.500" width="63.300" height="36.500" stroke-width="1.100"/>
<rect x="865.300" y="674.300" width="59.700" height="32.900" stroke-width=".9"/>
<rect x="868.300" y="676.800" width="53.800" height="27" stroke-width=".9"/>
<rect x="871" y="679.200" width="48.600" height="22" stroke-width="1"/>
<path d="M865.300 674.300 L871 679.200 M925 674.300 L919.600 679.200 M865.300 707.200 L871 701.200 M925 707.200 L919.600 701.200" stroke-width=".7"/>
<!-- lines -->
<path d="M896 752.300 L958 752.300" stroke="#62e273" stroke-width="1.300"/>
<path d="M896 791.200 L958 791.200" stroke="#c9485c" stroke-width="1.300"/>
<path d="M896 830 L958 830" stroke="#9b5fc4" stroke-width="1.300"/>
<path d="M896 869 L958 869" stroke="#6aa870" stroke-width="1.300"/>
<!-- cursor -->
<path d="M1144.500 507.500 L1144.500 521 L1148 518 L1150.300 523.300 L1152.300 522.400 L1150 517.300 L1154.300 517 Z" fill="#fff" stroke="#222" stroke-width="1"/>
</svg>
<div class="lg" style="left:407.500px;top:58.500px">Legende Trinkwasser</div>
<div class="lg" style="left:455.700px;top:121.500px">Spülmaschine</div>
<div class="lg" style="left:455.700px;top:196.500px">Spüle mit Schrank</div>
<div class="lg" style="left:455.700px;top:261.700px">Urinal</div>
<div class="lg" style="left:455.700px;top:353px">Dusche</div>
<div class="lg" style="left:455.700px;top:432.500px">Frischwasserstation mit Zirkulation</div>
<div class="lg" style="left:706.500px;top:121.500px">Wasserzähler</div>
<div class="lg" style="left:706.500px;top:150px">Strömungsteiler - DN 32/20</div>
<div class="lg" style="left:706.500px;top:175.300px">Zirkulationsregelventil</div>
<div class="lg" style="left:706.500px;top:196.500px">Anbohrschelle</div>
<div class="lg" style="left:706.500px;top:227px">Absperrarmatur, mit Entleerungshahn</div>
<div class="lg" style="left:706.500px;top:251px">Absperrventil, allgemein - Gewinde</div>
<div class="lg" style="left:706.500px;top:309.500px">Hauswasser-Feinfilter</div>
<div class="lg" style="left:706.500px;top:367.700px">Rückflussverhinderer</div>
<div class="lg" style="left:693.500px;top:412px">WC mit Spülkasten - Standard</div>
<div class="lg" style="left:693.500px;top:483px">Waschtisch - Standard</div>
<div class="lg" style="left:725.500px;top:545.100px">Kaltwasser</div>
<div class="lg" style="left:725.500px;top:584px">Warmwasser</div>
<div class="lg" style="left:725.500px;top:622.800px">Zirkulation</div>
<div class="lg" style="left:725.500px;top:661.800px">Ringleitung</div>

<!-- navigation bar -->
<div class="abs" style="left:1154px;top:1px;width:32px;height:110px;border:1px solid #c6c5c9;border-radius:4px;background:#f7f6f8;box-shadow:0 1px 1px #ddd"></div>
<svg class="abs" style="left:1154px;top:1px" width="32" height="110" viewBox="0 0 32 110" fill="none">
<circle cx="25" cy="6" r="2.600" fill="#e4e3e6" stroke="#c0bfc3" stroke-width=".8"/><path d="M23.700 4.700 L26.300 7.300 M26.300 4.700 L23.700 7.300" stroke="#aaa" stroke-width=".7"/>
<circle cx="25" cy="102" r="2.600" fill="#e4e3e6" stroke="#c0bfc3" stroke-width=".8"/><path d="M23.500 102 L26.500 102" stroke="#aaa" stroke-width=".8"/>
<rect x="6" y="21" width="17" height="16" rx="6" stroke="#b9b8bc" stroke-width="1.200" fill="#fafafa"/>
<circle cx="13.500" cy="29" r="4" stroke="#b9b8bc" stroke-width="1.100"/><path d="M16.300 32 L19 35" stroke="#b9b8bc" stroke-width="1.300"/>
<text x="15" y="41.500" font-family="Liberation Sans, sans-serif" font-size="9" font-weight="bold" fill="#6f9bd1" stroke="none" letter-spacing="-.6">2D</text>
<path d="M12.500 46.500 L18.500 46.500 L15.500 49.500 Z" fill="#aaa"/>
<path d="M4 55.500 L28 55.500" stroke="#d2d1d5" stroke-width="1"/>
<rect x="9" y="62" width="10" height="9" fill="#b5d4b0" stroke="#9dbb98" stroke-width="1"/>
<circle cx="19.500" cy="72" r="3" stroke="#b2b1b5" stroke-width="1.100" fill="#fafafa"/><path d="M21.600 74.300 L24 77" stroke="#b2b1b5" stroke-width="1.300"/>
<path d="M12.500 85.500 L18.500 85.500 L15.500 88.500 Z" fill="#aaa"/>
</svg>

</div>
<div id="vscroll"><svg class="abs" style="left:3px;top:5px" width="9" height="7" viewBox="0 0 9 7"><path d="M1 5.500 L4.500 1.800 L8 5.500" fill="none" stroke="#333" stroke-width="1.400"/></svg><div class="abs" style="left:0;top:372px;width:14px;height:16px;background:#cfced2"></div></div>

<!-- RIGHT PANEL -->
<div id="right">
<div class="abs" style="left:0;top:0;width:3px;height:766px;background:#fff;border-left:1px solid #cfced2;border-right:1px solid #cfced2"></div>
<div class="abs" style="left:3px;top:58px;width:318px;height:708px;background:#fff"></div>
<div class="abs" style="left:322px;top:20px;width:1px;height:746px;background:#c4c3c7;z-index:2"></div>
<div class="abs" style="left:4.500px;top:3px;font-size:11.4px;letter-spacing:-0.8px;color:#2a2a2a">LINEAR</div><div class="abs" style="left:0;top:0;width:323px;height:1px;background:#d9d8db"></div>
<svg class="abs" style="left:310px;top:5px" width="11" height="11" viewBox="0 0 11 11"><path d="M1.500 1.500 L9.500 9.500 M9.500 1.500 L1.500 9.500" stroke="#111" stroke-width="1.600"/></svg>
<!-- tabs -->
<div class="abs" style="left:4px;top:21px;width:58px;height:36px;border:1px solid #c4c3c7;border-bottom:none;background:#f3f2f4"></div>
<div class="abs" style="left:62px;top:20px;width:61px;height:38px;background:#fff"></div>
<div class="abs" style="left:123px;top:21px;width:59px;height:36px;border:1px solid #c4c3c7;border-bottom:none;background:#f3f2f4"></div>
<div class="abs" style="left:182px;top:21px;width:59px;height:36px;border:1px solid #c4c3c7;border-left:none;border-bottom:none;background:#f3f2f4"></div>
<div class="abs" style="left:241px;top:21px;width:59px;height:36px;border:1px solid #c4c3c7;border-left:none;border-bottom:none;background:#f3f2f4"></div>
<!-- tab icons -->
<svg class="abs" style="left:19px;top:24px" width="28" height="30" viewBox="0 0 28 30"><path d="M6 1 L6 28 M14 1 L14 28 M22 1 L22 28" stroke="#333" stroke-width="2.400"/><rect x="2.500" y="14" width="7" height="5" rx="1" fill="#1c1c1c"/><rect x="10.500" y="7" width="7" height="5" rx="1" fill="#1c1c1c"/><rect x="18.500" y="13" width="7" height="5" rx="1" fill="#1c1c1c"/></svg>
<svg class="abs" style="left:79px;top:24px" width="27" height="27" viewBox="0 0 26 26"><path d="M2.500 23.500 L4.500 15.500 L16.500 3.500 Q18.500 1.800 20.500 3.500 L22.500 5.500 Q24.200 7.500 22.500 9.500 L10.500 21.500 Z" fill="#1c1c1c"/><path d="M15 6 L20 11" stroke="#fff" stroke-width="1.300"/><path d="M4.800 16.500 L9.500 21.200" stroke="#fff" stroke-width="1"/></svg>
<svg class="abs" style="left:138px;top:26px" width="26" height="24" viewBox="0 0 26 24"><rect x="1" y="1" width="5" height="21" rx="1" fill="#2a2a2a"/><rect x="7" y="4" width="4" height="18" rx="1" fill="#2a2a2a"/><rect x="12" y="6" width="3.500" height="16" rx="1" fill="#2a2a2a"/><rect x="16.500" y="2" width="5" height="20" rx="1" fill="#2a2a2a"/><path d="M0 23 L23 23" stroke="#666" stroke-width="1"/></svg>
<svg class="abs" style="left:200px;top:27px" width="23" height="23" viewBox="0 0 23 23"><g fill="#1c1c1c"><rect x="0.500" y="0.500" width="9.500" height="9.500" rx="1"/><rect x="12.500" y="0.500" width="9.500" height="9.500" rx="1"/><rect x="0.500" y="12.500" width="9.500" height="9.500" rx="1"/><rect x="12.500" y="12.500" width="9.500" height="9.500" rx="1"/></g><path d="M3 5.200 L7.500 5.200 M5.200 3 L5.200 7.500 M15 5.200 L19.500 5.200 M3.500 15.500 L7 19 M7 15.500 L3.500 19 M15 16 L19.500 16 M15 18.600 L19.500 18.600" stroke="#fff" stroke-width="1.300"/></svg>
<svg class="abs" style="left:255px;top:24px" width="32" height="30" viewBox="0 0 32 30"><path d="M16 2.500 L30 27 L2 27 Z" fill="none" stroke="#1c1c1c" stroke-width="2.300" stroke-linejoin="round"/><path d="M16 10.500 L16 19" stroke="#1c1c1c" stroke-width="2.600"/><circle cx="16" cy="22.800" r="1.600" fill="#1c1c1c"/></svg>
<svg class="abs" style="left:306px;top:21px" width="16" height="16" viewBox="0 0 16 16"><circle cx="8" cy="8" r="6.300" fill="#fff" stroke="#111" stroke-width="1.500"/><text x="5.300" y="11.800" font-family="Liberation Sans, sans-serif" font-weight="bold" font-size="10.500" fill="#111">?</text></svg>
<div class="abs" style="left:308px;top:41px;width:12px;height:11px;border:1.500px solid #111;background:#fff"></div>
<div class="dd on" style="left:311px;top:45px;border-top-color:#111"></div>
<!-- gradient header -->
<div class="abs" style="left:4px;top:57.500px;width:318px;height:160px;background:linear-gradient(180deg,#b0b39a 0px,#b6b9a1 8px,#c0c3ad 22px,#cacbb9 36px,#d2d2c5 50px,#dfdfd6 70px,#ebebe5 100px,#f7f7f4 130px,#fff 160px)"></div>
<svg class="abs" style="left:22px;top:63px" width="18" height="28" viewBox="0 0 18 28"><path d="M9 1.500 C9 6 16.500 12.500 16.500 19 A7.500 7.500 0 0 1 1.500 19 C1.500 12.500 9 6 9 1.500 Z" fill="#fff"/><path d="M4.500 19.500 A4.500 4.500 0 0 0 8 24" fill="none" stroke="#dcdccf" stroke-width="1.200"/></svg>
<div class="abs" style="left:51px;top:70px;font-size:16.500px;letter-spacing:-1px;color:#f6f5e8">Trinkwasser</div>
<div class="rp" style="left:11px;top:108px">Konstruktionsebene / Versatz (+/-)</div>
<!-- row 1 -->
<div class="abs" style="left:7px;top:127px;width:285px;height:19px;border:1px solid #b4b3b7;background:linear-gradient(#f4f3f5,#e5e4e7)"></div>
<svg class="abs" style="left:13px;top:129px" width="12" height="16" viewBox="0 0 12 16"><path d="M6 1 A4.300 4.300 0 0 1 8.500 9 L8.500 11 L3.500 11 L3.500 9 A4.300 4.300 0 0 1 6 1 Z" fill="#fbf3c4" stroke="#a89a4a" stroke-width="1"/><path d="M4 12.500 L8 12.500 M4.500 14.300 L7.500 14.300" stroke="#666" stroke-width="1"/></svg>
<div class="rp" style="left:29.500px;top:130px;letter-spacing:-0.85px">EG - OK RFB</div>
<svg class="abs" style="left:278px;top:134px" width="8" height="6" viewBox="0 0 8 6"><path d="M1 1.200 L4 4.200 L7 1.200" fill="none" stroke="#555" stroke-width="1.100"/></svg>
<div class="abs" style="left:295px;top:126px;width:23px;height:21px;border:1.500px solid #222;background:#f4f3f5;text-align:center;line-height:16px;font-size:11px;color:#222">...</div>
<!-- row 2 -->
<div class="abs" style="left:7px;top:151px;width:208px;height:19px;border:1px solid #b4b3b7;background:linear-gradient(#f4f3f5,#e5e4e7)"></div>
<div class="rp" style="left:13px;top:154px;letter-spacing:-0.5px">Aktuelles Geschoss</div>
<svg class="abs" style="left:201px;top:158px" width="8" height="6" viewBox="0 0 8 6"><path d="M1 1.200 L4 4.200 L7 1.200" fill="none" stroke="#555" stroke-width="1.100"/></svg>
<div class="abs" style="left:218px;top:151px;width:74px;height:19px;border:1px solid #c4c3c7;background:#fff"></div>
<div class="rp" style="left:218px;top:153px;width:71px;text-align:right">1000 mm</div>
<div class="abs" style="left:295px;top:150px;width:23px;height:21px;border:1.500px solid #222;background:#f4f3f5"></div>
<svg class="abs" style="left:300px;top:154px" width="13" height="13" viewBox="0 0 13 13"><circle cx="6.500" cy="6.500" r="3.800" fill="none" stroke="#222" stroke-width="1.200"/><path d="M6.500 0.500 L6.500 4 M6.500 9 L6.500 12.500 M0.500 6.500 L4 6.500 M9 6.500 L12.500 6.500" stroke="#222" stroke-width="1.200"/></svg>
<div class="rp" style="left:11.500px;top:185px;letter-spacing:-0.55px">Systemklasse</div>
<div class="abs" style="left:8px;top:204px;width:257px;height:19px;border:1px solid #b4b3b7;background:linear-gradient(#f4f3f5,#e5e4e7)"></div>
<div class="rp" style="left:14px;top:207px">Ringleitung</div>
<svg class="abs" style="left:251px;top:211px" width="8" height="6" viewBox="0 0 8 6"><path d="M1 1.200 L4 4.200 L7 1.200" fill="none" stroke="#555" stroke-width="1.100"/></svg>
<div class="abs" style="left:267px;top:203px;width:23px;height:21px;border:1.500px solid #222;background:#f4f3f5;text-align:center;line-height:16px;font-size:11px;color:#222">...</div>
<div class="abs" style="left:293px;top:203px;width:23px;height:21px;border:1.500px solid #222;background:#f4f3f5;text-align:center;line-height:17px;font-size:11px;color:#222">&lt;</div>
<!-- accordion -->
<div class="acc" style="top:235px">Rohre &lt;<i></i></div>
<div class="acc" style="top:259px">Parallele Leitungen &lt;<i></i></div>
<div class="acc" style="top:283px">Bauteile anbinden &lt;<i></i></div>
<div class="acc" style="top:307px">Automatische Verbindung &lt;</div>
<div class="acc" style="top:331px">T-Stück Verbindung &lt;</div>
<div class="acc" style="top:355px">Leitungsversprung &lt;<i></i></div>
<div class="acc" style="top:379px">Legende &lt;</div>

</div>

<!-- PLAYER -->
<div id="player">
<svg class="abs" style="left:0;top:0" width="1778" height="52" viewBox="0 0 1778 52">
<circle cx="26" cy="26" r="21.500" fill="#1b3d4a"/>
<path d="M19 14.500 L19 37.500 L37 26 Z" fill="#fff" stroke="#fff" stroke-width="1.500" stroke-linejoin="round"/>
<rect x="1483" y="24.200" width="23" height="4" rx="2" fill="#dedede"/>
<rect x="142" y="24.200" width="1340" height="3.600" rx="1.800" fill="#1b3d4a"/>
<circle cx="1481.500" cy="26" r="6.800" fill="#1b3d4a"/>
<!-- gear -->
<g transform="translate(1616 26) scale(0.88)" fill="none" stroke="#2a2a2a" stroke-width="2" stroke-linejoin="round">
<path d="M-1.800 -10.200 L1.800 -10.200 L2.400 -7.600 L4.400 -6.700 L6.700 -8.200 L9.200 -5.600 L7.700 -3.400 L8.500 -1.400 L11 -0.800 L11 2.800 L8.500 3.400 L7.600 5.400 L9 7.700 L6.400 10.200 L4.200 8.700 L2.200 9.500 L1.600 12 L-2 12 L-2.600 9.500 L-4.600 8.600 L-6.900 10 L-9.400 7.400 L-7.900 5.200 L-8.700 3.200 L-11.200 2.600 L-11.200 -1 L-8.700 -1.600 L-7.800 -3.600 L-9.200 -5.900 L-6.600 -8.400 L-4.400 -6.900 L-2.400 -7.700 Z" transform="translate(0.100 -0.900)"/>
<path d="M3.300 -2.600 A4.200 4.200 0 1 1 -0.500 -4.200"/>
</g>
<!-- fast forward -->
<g fill="none" stroke-linejoin="round" stroke-linecap="round" stroke-width="1.800">
<path d="M1653.500 21.800 L1649.500 19.500 L1649.500 32.500 L1653.500 30.200" stroke="#c4c4c4"/>
<path d="M1662 22.300 L1657 19.200 L1657 32.800 L1662 29.700" stroke="#5a5a5a"/>
<path d="M1664.500 19 L1664.500 33 L1675.500 26 Z" stroke="#222"/>
</g>
<!-- volume -->
<g transform="translate(0 1.500)" fill="none" stroke="#2a2a2a" stroke-width="1.800" stroke-linejoin="round" stroke-linecap="round">
<path d="M1702 21 L1697 21 L1697 28.500 L1702 28.500 M1702 21 L1702 28.500 M1702 21 L1711.500 15 L1711.500 34.500 L1702 28.500"/>
<path d="M1712.500 21.300 A3.600 3.600 0 0 1 1712.500 28.300"/>
<path d="M1716.500 17 A9.300 9.300 0 0 1 1716.500 32.800"/>
</g>
<!-- shrink -->
<g fill="none" stroke="#2a2a2a" stroke-width="1.800" stroke-linecap="round" stroke-linejoin="round">
<path d="M1764 17 L1757 24 M1757 19 L1757 24 L1762 24"/>
<path d="M1746 35 L1753 28 M1753 33 L1753 28 L1748 28"/>
</g>
</svg>
<div class="abs" style="left:65.500px;top:20px;font-size:10px;letter-spacing:-0.25px;color:#222;white-space:nowrap">04:50 / 04:55</div>

</div>

</div>
</body>
</html>
